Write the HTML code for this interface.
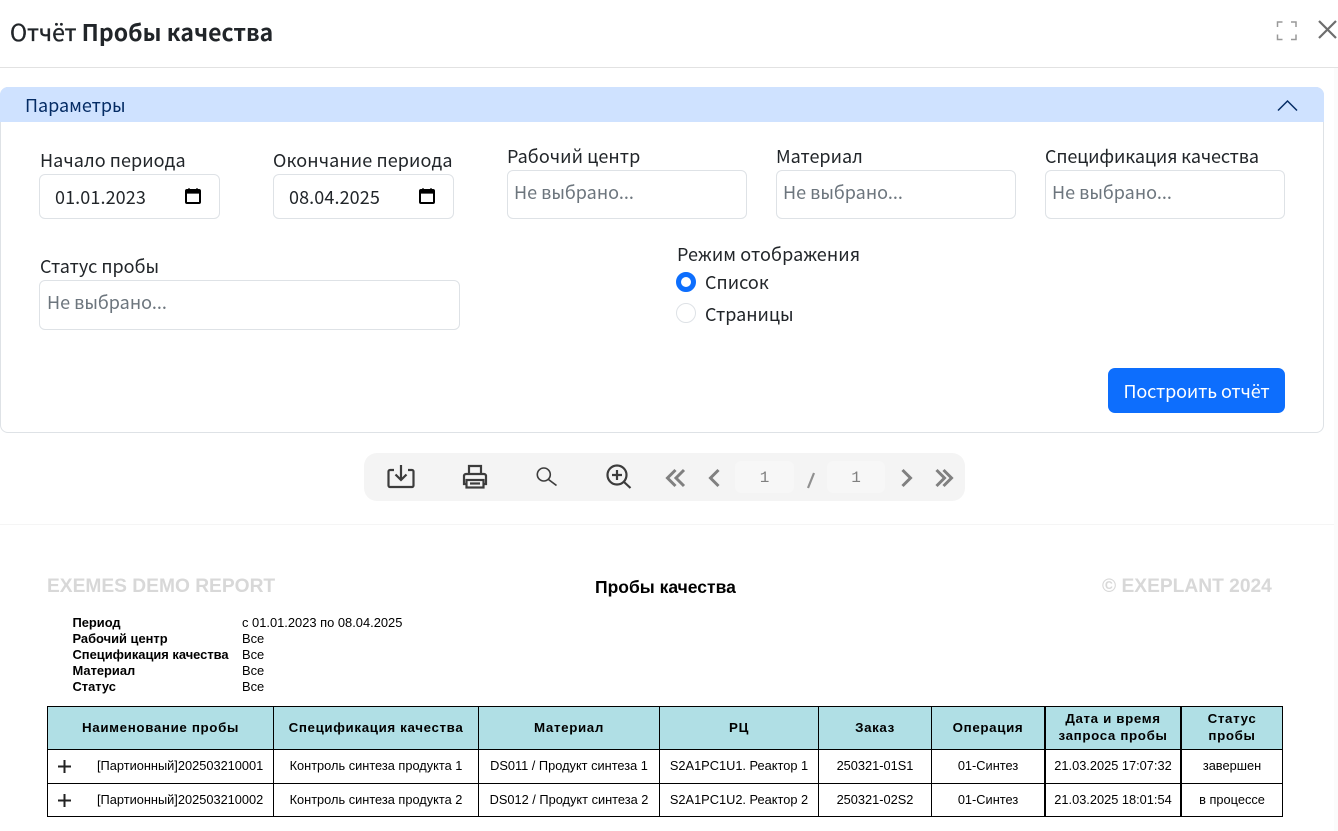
<!DOCTYPE html>
<html lang="ru"><head><meta charset="utf-8"><title>Отчёт Пробы качества</title>
<style>
html,body{margin:0;padding:0;background:#fff;width:1338px;height:831px;overflow:hidden}
body{position:relative;font-family:"Noto Sans CJK SC","Liberation Sans",sans-serif;color:#212529}
.t{position:absolute;white-space:nowrap}
.b{position:absolute;box-sizing:border-box}
.u{font-size:18px;line-height:24px;height:24px}
.inp{position:absolute;box-sizing:border-box;border:1px solid #dee2e6;border-radius:6px;background:#fff}
.ph{color:#6c757d}
.r{font-family:"Liberation Sans",Arial,sans-serif;color:#000}
.h{font-weight:bold;font-size:13.33px;letter-spacing:.64px;line-height:17px;text-align:center}
.c{font-size:12.8px;line-height:16px;text-align:center}
.i{font-size:12.9px;line-height:16px}
.m{font-weight:bold;font-size:12.9px;line-height:16px}
.k{background:#000;position:absolute}
svg{position:absolute;overflow:visible}
</style></head><body>
<div class="b" style="left:1334px;top:68px;width:4px;height:763px;background:#fbfbfb"></div>
<div class="t" style="left:10px;top:15px;font-size:23px;line-height:32px;letter-spacing:.02px"><span style="-webkit-text-stroke:.35px #212529">Отчёт</span> <b>Пробы качества</b></div>
<div class="b" style="left:0;top:67px;width:1338px;height:1px;background:#e2e2e2"></div>
<svg style="left:0;top:0" width="1338" height="68" fill="none"><path d="M1277.500 27V22h5M1291 22h5V27M1277.500 34.500V39.500h5M1291 39.500h5V34.500" stroke="#999" stroke-width="1.500"/><path d="M1319 21l17 17M1336 21l-17 17" stroke="#6d6d6d" stroke-width="2.200"/></svg>

<div class="b" style="left:0;top:87px;width:1324px;height:346px;border:1px solid #dee2e6;border-radius:8px;background:#fff"></div>
<div class="b" style="left:0;top:87px;width:1324px;height:35px;background:#cfe2ff;border-radius:8px 8px 0 0"></div>
<div class="t u" style="left:25px;top:93px;color:#052c65">Параметры</div>
<svg style="left:0;top:0" width="1338" height="130" fill="none"><path d="M1278 110.500l9.500-9.500 9.500 9.500" stroke="#052c65" stroke-width="1.500"/></svg>

<div class="t u" style="left:40px;top:148px;letter-spacing:.07px">Начало периода</div>
<div class="t u" style="left:273px;top:148px;letter-spacing:.11px">Окончание периода</div>
<div class="t u" style="left:507px;top:144px;letter-spacing:.07px">Рабочий центр</div>
<div class="t u" style="left:776px;top:144px">Материал</div>
<div class="t u" style="left:1045px;top:144px;letter-spacing:-.14px">Спецификация качества</div>

<div class="inp" style="left:39px;top:174px;width:181px;height:45px"></div>
<div class="t u" style="left:55px;top:185px;letter-spacing:.1px">01.01.2023</div>
<div class="inp" style="left:273px;top:174px;width:181px;height:45px"></div>
<div class="t u" style="left:289px;top:185px;letter-spacing:.1px">08.04.2025</div>
<svg style="left:0;top:0" width="460" height="220" fill="none"><rect x="186" y="190" width="14" height="13" stroke="#000" stroke-width="2" rx="1"/><path d="M186 191h14v2h-14zM189 188v3M197 188v3" fill="#000" stroke="#000" stroke-width="1.200"/><rect x="420" y="190" width="14" height="13" stroke="#000" stroke-width="2" rx="1"/><path d="M420 191h14v2h-14zM423 188v3M431 188v3" fill="#000" stroke="#000" stroke-width="1.200"/></svg>

<div class="inp" style="left:507px;top:170px;width:240px;height:49px"></div>
<div class="t u ph" style="left:514px;top:180px">Не выбрано...</div>
<div class="inp" style="left:776px;top:170px;width:240px;height:49px"></div>
<div class="t u ph" style="left:783px;top:180px">Не выбрано...</div>
<div class="inp" style="left:1045px;top:170px;width:240px;height:49px"></div>
<div class="t u ph" style="left:1052px;top:180px">Не выбрано...</div>

<div class="t u" style="left:40px;top:254px">Статус пробы</div>
<div class="inp" style="left:39px;top:280px;width:421px;height:50px"></div>
<div class="t u ph" style="left:47px;top:290px">Не выбрано...</div>

<div class="t u" style="left:677px;top:242px;letter-spacing:.11px">Режим отображения</div>
<div class="b" style="left:676px;top:272px;width:20px;height:20px;border-radius:50%;background:#fff;border:5px solid #0d6efd"></div>
<div class="t u" style="left:705px;top:270px;letter-spacing:.05px">Список</div>
<div class="b" style="left:676px;top:303px;width:20px;height:20px;border-radius:50%;background:#fff;border:1px solid #dee2e6"></div>
<div class="t u" style="left:705px;top:302px">Страницы</div>

<div class="b" style="left:1108px;top:368px;width:177px;height:45px;background:#0d6efd;border-radius:7px"></div>
<div class="t u" style="left:1108px;width:177px;text-align:center;top:379px;color:#fff;letter-spacing:-.12px">Построить отчёт</div>

<div class="b" style="left:364px;top:453px;width:601px;height:48px;background:#f4f4f4;border-radius:13px"></div>
<div class="b" style="left:735px;top:461px;width:59px;height:32px;background:#f7f7f7;border-radius:6px"></div>
<div class="b" style="left:827px;top:461px;width:58px;height:32px;background:#f7f7f7;border-radius:6px"></div>
<div class="t" style="left:735px;width:59px;text-align:center;top:468px;font:16px/20px 'Liberation Mono',monospace;color:#808080">1</div>
<div class="t" style="left:827px;width:58px;text-align:center;top:468px;font:16px/20px 'Liberation Mono',monospace;color:#808080">1</div>
<svg style="left:0;top:0" width="1338" height="510" fill="none">
<g stroke="#3c3c3c" stroke-width="2.200">
<path d="M394 470h-4a1.500 1.500 0 0 0-1.500 1.500v14a1.500 1.500 0 0 0 1.500 1.500h22a1.500 1.500 0 0 0 1.500-1.500v-14a1.500 1.500 0 0 0-1.500-1.500h-4"/>
<path d="M401 465v14M395.500 474.500l5.500 5.500 5.500-5.500"/>
<path d="M469 474v-8h12v8M467 484h-3v-8a2 2 0 0 1 2-2h18a2 2 0 0 1 2 2v8h-3"/><rect x="466.500" y="480" width="17" height="7.500"/><path d="M470 483.500h10"/>
<circle cx="617" cy="475" r="9.500"/><path d="M624 482l6.500 6M617 470v10M612 475h10"/>
</g>
<circle cx="543.800" cy="474.500" r="6.500" stroke="#3c3c3c" stroke-width="1.600"/><path d="M548.500 479.500l8 6" stroke="#3c3c3c" stroke-width="1.700"/>
<g stroke="#808080" stroke-width="3">
<path d="M675.500 470l-8 8 8 8M684 470l-8 8 8 8M718.500 470l-8 8 8 8M902.500 470l8 8-8 8M936.500 470l8 8-8 8M943.500 470l8 8-8 8"/>
<path d="M814 473l-6 15" stroke-width="2.200" stroke="#909090"/>
</g>
</svg>
<div class="b" style="left:0;top:524px;width:1334px;height:1px;background:#f5f5f5"></div>

<div class="t r" style="left:47px;top:576px;font-size:19.2px;line-height:22px;font-weight:bold;color:#d8d8d8">EXEMES DEMO REPORT</div>
<div class="t r" style="left:595px;top:576px;font-size:17.500px;line-height:22px;font-weight:bold">Пробы качества</div>
<div class="t r" style="left:1102px;top:576px;font-size:19.2px;line-height:22px;font-weight:bold;color:#d8d8d8">© EXEPLANT 2024</div>

<div class="t r m" style="left:72.500px;top:615px">Период</div><div class="t r i" style="left:242px;top:615px">с 01.01.2023 по 08.04.2025</div>
<div class="t r m" style="left:72.500px;top:631px">Рабочий центр</div><div class="t r i" style="left:242px;top:631px">Все</div>
<div class="t r m" style="left:72.500px;top:647px">Спецификация качества</div><div class="t r i" style="left:242px;top:647px">Все</div>
<div class="t r m" style="left:72.500px;top:663px">Материал</div><div class="t r i" style="left:242px;top:663px">Все</div>
<div class="t r m" style="left:72.500px;top:679px">Статус</div><div class="t r i" style="left:242px;top:679px">Все</div>

<div class="b" style="left:47px;top:706px;width:1236px;height:43px;background:#b0dfe5"></div>
<div class="k" style="left:47px;top:706px;width:1236px;height:1px"></div>
<div class="k" style="left:47px;top:749px;width:1236px;height:1px"></div>
<div class="k" style="left:47px;top:783px;width:1236px;height:1px"></div>
<div class="k" style="left:47px;top:816px;width:1236px;height:1px"></div>
<div class="k" style="left:47px;top:706px;width:1px;height:111px"></div>
<div class="k" style="left:273px;top:706px;width:1px;height:111px"></div>
<div class="k" style="left:478px;top:706px;width:1px;height:111px"></div>
<div class="k" style="left:659px;top:706px;width:1px;height:111px"></div>
<div class="k" style="left:818px;top:706px;width:1px;height:111px"></div>
<div class="k" style="left:931px;top:706px;width:1px;height:111px"></div>
<div class="k" style="left:1044px;top:706px;width:2px;height:111px"></div>
<div class="k" style="left:1180px;top:706px;width:2px;height:111px"></div>
<div class="k" style="left:1282px;top:706px;width:1px;height:111px"></div>

<div class="t r h" style="left:48px;width:225px;top:719px">Наименование пробы</div>
<div class="t r h" style="left:274px;width:204px;top:719px">Спецификация качества</div>
<div class="t r h" style="left:479px;width:180px;top:719px">Материал</div>
<div class="t r h" style="left:660px;width:158px;top:719px">РЦ</div>
<div class="t r h" style="left:819px;width:112px;top:719px">Заказ</div>
<div class="t r h" style="left:932px;width:112px;top:719px">Операция</div>
<div class="t r h" style="left:1046px;width:134px;top:710px">Дата и время<br>запроса пробы</div>
<div class="t r h" style="left:1182px;width:100px;top:710px">Статус<br>пробы</div>

<svg style="left:0;top:0" width="100" height="831" fill="none"><path d="M58 766.500h13M64.500 760v13M58 800.500h13M64.500 794v13" stroke="#222" stroke-width="2"/></svg>

<div class="t r c" style="left:97px;top:758px">[Партионный]202503210001</div>
<div class="t r c" style="left:274px;width:204px;top:758px">Контроль синтеза продукта 1</div>
<div class="t r c" style="left:479px;width:180px;top:758px">DS011 / Продукт синтеза 1</div>
<div class="t r c" style="left:660px;width:158px;top:758px">S2A1PC1U1. Реактор 1</div>
<div class="t r c" style="left:819px;width:112px;top:758px">250321-01S1</div>
<div class="t r c" style="left:932px;width:112px;top:758px">01-Синтез</div>
<div class="t r c" style="left:1046px;width:134px;top:758px">21.03.2025 17:07:32</div>
<div class="t r c" style="left:1182px;width:100px;top:758px">завершен</div>

<div class="t r c" style="left:97px;top:792px">[Партионный]202503210002</div>
<div class="t r c" style="left:274px;width:204px;top:792px">Контроль синтеза продукта 2</div>
<div class="t r c" style="left:479px;width:180px;top:792px">DS012 / Продукт синтеза 2</div>
<div class="t r c" style="left:660px;width:158px;top:792px">S2A1PC1U2. Реактор 2</div>
<div class="t r c" style="left:819px;width:112px;top:792px">250321-02S2</div>
<div class="t r c" style="left:932px;width:112px;top:792px">01-Синтез</div>
<div class="t r c" style="left:1046px;width:134px;top:792px">21.03.2025 18:01:54</div>
<div class="t r c" style="left:1182px;width:100px;top:792px">в процессе</div>
</body></html>
